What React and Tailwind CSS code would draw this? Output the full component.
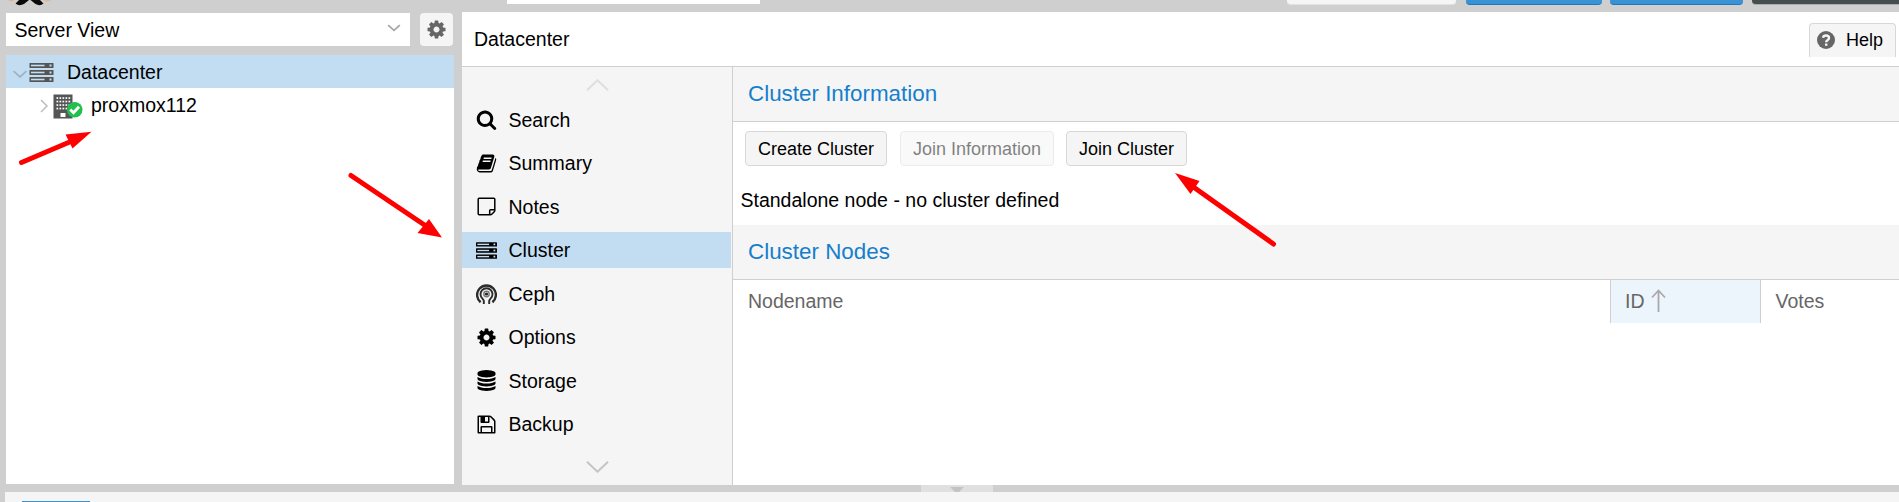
import React from "react";

const PATHS = {
  search:
    "M1216 832q0-185-131.5-316.5t-316.5-131.5-316.5 131.5-131.5 316.5 131.5 316.5 316.5 131.5 316.5-131.5 131.5-316.5zm512 832q0 52-38 90t-90 38q-54 0-90-38l-343-342q-179 124-399 124-143 0-273.5-55.5t-225-150-150-225-55.5-273.5 55.5-273.5 150-225 225-150 273.5-55.5 273.5 55.5 225 150 150 225 55.5 273.5q0 220-124 399l343 343q37 37 37 90z",
  cog: "M1152 896q0-106-75-181t-181-75-181 75-75 181 75 181 181 75 181-75 75-181zm512-109v222q0 12-8 23t-20 13l-185 28q-19 54-39 91 35 50 107 138 10 12 10 25t-9 23q-27 37-99 108t-94 71q-12 0-26-9l-138-108q-44 23-91 38-16 136-29 186-7 28-36 28h-222q-14 0-24.5-8.5t-11.5-21.5l-28-184q-49-16-90-37l-141 107q-10 9-25 9-14 0-25-11-126-114-165-168-7-10-7-23 0-12 8-23 15-21 51-66.5t54-70.5q-27-50-41-99l-183-27q-13-2-21-12.5t-8-23.5v-222q0-12 8-23t19-13l186-28q14-46 39-92-40-57-107-138-10-12-10-24 0-10 9-23 26-36 98.5-107.5t94.5-71.5q13 0 26 10l138 107q44-23 91-38 16-136 29-186 7-28 36-28h222q14 0 24.5 8.5t11.5 21.5l28 184q49 16 90 37l142-107q9-9 24-9 13 0 25 10 129 119 165 170 7 8 7 22 0 12-8 23-15 21-51 66.5t-54 70.5q26 50 41 98l183 28q13 2 21 12.5t8 23.5z",
  database:
    "M896 768q237 0 443-43t325-127v170q0 69-103 128t-280 93.5-385 34.5-385-34.5-280-93.5-103-128v-170q119 84 325 127t443 43zm0 768q237 0 443-43t325-127v170q0 69-103 128t-280 93.5-385 34.5-385-34.5-280-93.5-103-128v-170q119 84 325 127t443 43zm0-384q237 0 443-43t325-127v170q0 69-103 128t-280 93.5-385 34.5-385-34.5-280-93.5-103-128v-170q119 84 325 127t443 43zm0-1152q208 0 385 34.5t280 93.5 103 128v128q0 69-103 128t-280 93.5-385 34.5-385-34.5-280-93.5-103-128v-128q0-69 103-128t280-93.5 385-34.5z",
  floppy:
    "M512 1536h768v-384h-768v384zm896 0h128v-896q0-14-10-38.5t-20-34.5l-281-281q-10-10-34-20t-39-10v416q0 40-28 68t-68 28h-576q-40 0-68-28t-28-68v-416h-128v1280h128v-416q0-40 28-68t68-28h832q40 0 68 28t28 68v416zm-384-928v-320q0-13-9.5-22.5t-22.5-9.5h-192q-13 0-22.5 9.5t-9.5 22.5v320q0 13 9.5 22.5t22.5 9.5h192q13 0 22.5-9.5t9.5-22.5zm640 32v928q0 40-28 68t-68 28h-1344q-40 0-68-28t-28-68v-1344q0-40 28-68t68-28h928q40 0 88 20t76 48l280 280q28 28 48 76t20 88z",
  book: "M1703 478q40 57 18 129l-275 906q-19 64-76.5 107.5t-122.5 43.5h-923q-77 0-148.5-53.5t-99.5-131.5q-24-67-2-127 0-4 3-27t4-37q1-8-3-21.5t-3-19.5q2-11 8-21t16.5-23.5 16.5-23.5q23-38 45-91.5t30-91.5q3-10 .5-30t-.5-28q3-11 17-28t17-23q21-36 42-92t25-90q1-9-2.5-32t.5-28q4-13 22-30.5t22-22.5q19-26 42.5-84.5t27.5-96.5q1-8-3-25.5t-2-26.5q2-8 9-18t18-23 17-21q8-12 16.5-30.5t15-35 16-36 19.5-32 26.5-23.5 36-11.5 47.5 5.5l-1 3q38-9 51-9h761q74 0 114 56t18 130l-274 906q-36 119-71.5 153.5t-128.5 34.5h-869q-27 0-38 15-11 16-1 43 24 70 144 70h923q29 0 56-15.5t35-41.5l300-987q7-22 5-57 38 15 59 43zm-1064 2q-4 13 2 22.5t20 9.5h608q13 0 25.5-9.5t16.5-22.5l21-64q4-13-2-22.5t-20-9.5h-608q-13 0-25.5 9.5t-16.5 22.5zm-83 256q-4 13 2 22.5t20 9.5h608q13 0 25.5-9.5t16.5-22.5l21-64q4-13-2-22.5t-20-9.5h-608q-13 0-25.5 9.5t-16.5 22.5z",
};

function Glyph({ name, className = "size-[21px]" }) {
  return (
    <svg viewBox="0 0 1792 1792" className={`shrink-0 ${className}`} fill="currentColor">
      <path d={PATHS[name]} />
    </svg>
  );
}

function NoteIcon() {
  return (
    <svg viewBox="0 0 21 21" className="size-[21px] shrink-0" fill="none" stroke="currentColor" strokeWidth="1.5">
      <path d="M2.2 3.2Q2.2 2.2 3.2 2.2H17.8Q18.8 2.2 18.8 3.2V14.4Q18.8 15.2 18 16L16 18Q15.2 18.8 14.4 18.8H3.2Q2.2 18.800 2.2 17.8Z" />
      <path d="M18.6 13.7H14.6Q13.7 13.7 13.7 14.6V18.6" />
    </svg>
  );
}

function ServerIcon({ className }) {
  return (
    <svg viewBox="0 0 24 19" className={`shrink-0 ${className}`}>
      {[0, 7, 14].map((y) => (
        <g key={y}>
          <rect x="0" y={y} width="24" height="5" rx="0.5" fill="currentColor" />
          <rect x="1.5" y={y + 1.7} width="13.5" height="1.6" fill="#c2ddf2" />
          <rect x="20" y={y + 1.5} width="2" height="2" fill="#c2ddf2" />
        </g>
      ))}
    </svg>
  );
}

function CephIcon() {
  return (
    <svg viewBox="0 0 21 21" className="size-[21px] shrink-0" fill="none" stroke="#2b2b2b">
      <path d="M4.6 19.2A9.4 9.4 0 1 1 16.400 19.200" strokeWidth="2.4" />
      <path d="M7.8 21V17.800Q7.600 16.800 6.600 15.800A6 6 0 1 1 14.400 15.800Q13.400 16.800 13.200 17.800V21" strokeWidth="1.900" />
      <circle cx="10.5" cy="11" r="2.7" stroke="#777" strokeWidth="1.4" />
      <circle cx="10.5" cy="11" r="1.6" fill="#222" stroke="none" />
    </svg>
  );
}

function Chevron({ d, className }) {
  return (
    <svg viewBox="0 0 24 12" className={`shrink-0 ${className}`} fill="none" stroke="currentColor" strokeWidth="2">
      <path d={d} />
    </svg>
  );
}

const MENU = [
  { label: "Search", icon: <Glyph name="search" /> },
  { label: "Summary", icon: <Glyph name="book" /> },
  { label: "Notes", icon: <NoteIcon /> },
  { label: "Cluster", icon: <ServerIcon className="h-[17px] w-[21px]" />, active: true },
  { label: "Ceph", icon: <CephIcon /> },
  { label: "Options", icon: <Glyph name="cog" /> },
  { label: "Storage", icon: <Glyph name="database" /> },
  { label: "Backup", icon: <Glyph name="floppy" /> },
];

function TopBar() {
  return (
    <div className="relative flex h-3 shrink-0 items-start">
      <svg viewBox="0 0 46 6" className="ml-[7px] h-1.5 w-[46px] shrink-0">
        <path d="M1 0H7L6 1.300Q3 2 1 0ZM44 0H37L38 1.300Q42 2 44 0Z" fill="#e0b58f" />
        <path d="M12 0H22L17 4Q12 6.500 8.500 3.500ZM23.500 0H33L36.500 3.500Q33 6.500 28.500 4Z" fill="#0a0a0a" />
      </svg>
      <div className="ml-[454px] h-1 w-[253px] bg-white" />
      <div className="ml-[527px] h-[5px] w-[169px] rounded-b border-b border-[#e2e2e2] bg-[#f5f5f5]" />
      <div className="ml-[10px] h-[5px] w-[136px] rounded-b border-b border-[#1f78bd] bg-[#3892d4]" />
      <div className="ml-2 h-[5px] w-[133px] rounded-b border-b border-[#1f78bd] bg-[#3892d4]" />
      <div className="ml-[9px] h-[5px] w-[147px] rounded-bl border-b border-[#a2b0b0] bg-[#464d4d]" />
    </div>
  );
}

function Sidebar() {
  return (
    <div className="ml-1.5 flex w-[448px] shrink-0 flex-col pt-px">
      <div className="flex h-[33px] shrink-0">
        <div className="flex w-[404px] items-center justify-between bg-white pr-[9px] pl-[8.5px]">
          <span>Server View</span>
          <Chevron d="M2 1L12 10L22 1" className="-mt-1 h-[8px] w-[14px] text-[#a6a6a6] [stroke-width:3]" />
        </div>
        <div className="ml-2.5 flex w-[33px] items-center justify-center rounded bg-[#f5f5f5] text-[#666]">
          <Glyph name="cog" />
        </div>
      </div>
      <div className="mt-[9px] mb-px flex flex-1 flex-col bg-white">
        <div className="flex h-[33px] items-center bg-[#c2ddf2] pl-[7px]">
          <Chevron d="M1 1L12 11L23 1" className="mt-1 h-[8px] w-[14px] text-[#9fb2c1] [stroke-width:3]" />
          <ServerIcon className="ml-0.5 mt-0.5 h-[19px] w-[25px] text-[#555]" />
          <span className="ml-[13px]">Datacenter</span>
        </div>
        <div className="flex h-[33px] items-center pl-[34px]">
          <svg viewBox="0 0 8 14" className="mt-0.5 h-[14px] w-2 shrink-0" fill="none" stroke="#bdbdbd" strokeWidth="1.5">
            <path d="M1 1L7 7L1 13" />
          </svg>
          <svg viewBox="0 0 30 25" className="ml-[5px] mt-1 h-[25px] w-[30px] shrink-0">
            <rect x="0.5" y="0.5" width="19" height="24" fill="#555" />
            {[3.2, 6.700, 10.200, 13.700].map((y) =>
              [3.5, 6.500, 9.500, 12.500, 15.5].map((x) => (
                <rect key={`${x}-${y}`} x={x} y={y} width="1.7" height="1.7" fill="#fff" />
              )),
            )}
            <rect x="7.5" y="19" width="5" height="4" fill="#fff" />
            <circle cx="21.7" cy="15.8" r="7.800" fill="#21bf4b" />
            <path d="M17.3 15.500L20.5 18.700L26 12.800" fill="none" stroke="#fff" strokeWidth="3" />
          </svg>
          <span className="ml-[8px]">proxmox112</span>
        </div>
      </div>
    </div>
  );
}

function Menu() {
  return (
    <div className="flex w-[271px] shrink-0 flex-col border-r border-[#cfcfcf] bg-[#f5f5f5]">
      <Chevron d="M1 11.5L12 1L23 11.5" className="mt-3 ml-[124px] h-3 w-[23px] text-[#dedede]" />
      <div className="mt-[10.5px] flex flex-col gap-[7.5px]">
        {MENU.map(({ label, icon, active }) => (
          <div
            key={label}
            className={`flex h-9 w-[269px] items-center pl-[13.5px] ${active ? "bg-[#c2ddf2]" : ""}`}
          >
            {icon}
            <span className="ml-[12px]">{label}</span>
          </div>
        ))}
      </div>
      <Chevron d="M1 0.5L12 11L23 0.5" className="mt-[19px] ml-[124px] h-3 w-[23px] text-[#c4c4c4]" />
    </div>
  );
}

function ToolButton({ children, className }) {
  return (
    <div
      className={`flex h-[35px] items-center justify-center rounded border border-[#d8d8d8] bg-[#f5f5f5] text-[18px] ${className}`}
    >
      {children}
    </div>
  );
}

function PanelTitle({ children }) {
  return (
    <div className="flex h-[55px] items-center border-b border-[#cfcfcf] bg-[#f5f5f5] pb-px pl-[15px] text-[22.4px] text-[#157fcc]">
      {children}
    </div>
  );
}

function Content() {
  return (
    <div className="flex min-w-0 flex-1 flex-col">
      <PanelTitle>Cluster Information</PanelTitle>
      <div className="flex h-11 items-end pl-3">
        <ToolButton className="w-[142px]">Create Cluster</ToolButton>
        <ToolButton className="ml-[13px] w-[154px] opacity-50">Join Information</ToolButton>
        <ToolButton className="ml-3 w-[121px]">Join Cluster</ToolButton>
      </div>
      <div className="flex h-[59px] items-center pt-2 pl-[7.5px]">Standalone node - no cluster defined</div>
      <PanelTitle>Cluster Nodes</PanelTitle>
      <div className="flex h-[43px] text-[#666]">
        <div className="flex w-[877px] items-center pb-0.5 pl-[15px]">Nodename</div>
        <div className="flex w-[151px] items-center border-x border-[#cfcfcf] bg-[#edf5fc] pb-0.5 pl-[14px]">
          ID
          <svg viewBox="0 0 15 23" className="ml-1.5 h-[23px] w-[15px]" fill="none" stroke="#a9a9a9" strokeWidth="1.8">
            <path d="M7.5 23V1.5M1 8.5L7.5 1.5L14 8.5" />
          </svg>
        </div>
        <div className="flex items-center pb-0.5 pl-[14.5px]">Votes</div>
      </div>
    </div>
  );
}

function Arrows() {
  return (
    <svg viewBox="0 0 1899 502" className="pointer-events-none absolute top-0 left-0 h-[502px] w-[1899px]">
      <g stroke="#ff0000" strokeWidth="5" strokeLinecap="round" fill="#ff0000">
        <path d="M21.5 162.5L72 141" />
        <path d="M351 175.500L426 226" />
        <path d="M1273.500 244L1192 186" />
      </g>
      <g fill="#ff0000">
        <path d="M91.500 131.800L65.500 134.500L72.500 148.500Z" />
        <path d="M442 237.500L429 219L417.500 233Z" />
        <path d="M1175 173L1199.500 181L1190.500 194Z" />
      </g>
    </svg>
  );
}

export default function App() {
  return (
    <div className="relative flex h-[502px] w-[1899px] flex-col overflow-hidden bg-[#cfcfcf] font-['Liberation_Sans',Arial,sans-serif] text-[19.5px] leading-6 text-black">
      <TopBar />
      <div className="flex h-[473px] shrink-0">
        <Sidebar />
        <div className="ml-2 flex min-w-0 flex-1 flex-col bg-white">
          <div className="flex h-[55px] shrink-0 items-center justify-between border-b border-[#cfcfcf] pr-[3px] pl-3">
            <span>Datacenter</span>
            <div className="mt-px flex h-[34px] w-[87px] items-center rounded-t border border-b-0 border-[#d8d8d8] bg-[#f5f5f5] pl-[7px] text-[18px]">
              <svg viewBox="0 0 18 18" className="size-[18px] shrink-0">
                <circle cx="9" cy="9" r="9" fill="#666" />
                <path d="M6 6.700Q6.500 4.500 9 4.500Q12 4.500 12 7Q12 8.300 10.500 9.200Q9.200 10 9.200 11.200" fill="none" stroke="#f5f5f5" strokeWidth="2.400" />
                <rect x="8" y="12.500" width="2.400" height="2.300" fill="#f5f5f5" />
              </svg>
              <span className="-mt-px ml-[11px]">Help</span>
            </div>
          </div>
          <div className="flex flex-1">
            <Menu />
            <Content />
          </div>
        </div>
      </div>
      <div className="flex h-[7px] shrink-0 pl-[921px]">
        <div className="flex h-[7px] w-[72px] items-end justify-center bg-[#e0e0e0]">
          <svg viewBox="0 0 14 5" className="h-[5px] w-[14px]" fill="#c3c3c3">
            <path d="M0 0H14L9 5H5Z" />
          </svg>
        </div>
      </div>
      <div className="ml-[5px] flex h-2.5 items-end bg-[#f5f5f5] pl-[17px]">
        <div className="h-px w-[68px] bg-[#3892d4]" />
      </div>
      <Arrows />
    </div>
  );
}
